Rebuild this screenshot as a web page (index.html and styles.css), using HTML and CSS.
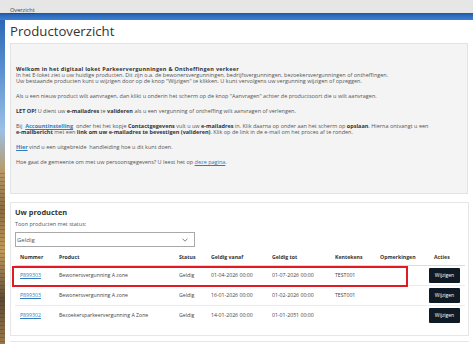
FILE: index.html
```html
<!DOCTYPE html>
<html lang="nl">
<head>
<meta charset="utf-8">
<title>Productoverzicht</title>
<link rel="stylesheet" href="styles.css">
</head>
<body>
<div class="topbar"><a href="#" class="crumb">Overzicht</a></div>
<div class="band"></div>
<div class="page">
  <main class="panel">
    <h1 class="title">Productoverzicht</h1>
    <section class="info">
      <p><b>Welkom in het digitaal loket Parkeervergunningen &amp; Ontheffingen verkeer</b><br>
      In het E-loket ziet u uw huidige producten. Dit zijn o.a. de bewonersvergunningen, bedrijfsvergunningen, bezoekersvergunningen of ontheffingen.<br>
      Uw bestaande producten kunt u wijzigen door op de knop "Wijzigen" te klikken. U kunt vervolgens uw vergunning wijzigen of opzeggen.</p>
      <p>Als u een nieuw product wilt aanvragen, dan klikt u onderin het scherm op de knop "Aanvragen" achter de productsoort die u wilt aanvragen.</p>
      <p><b>LET OP!</b> U dient uw <b>e-mailadres</b> te <b>valideren</b> als u een vergunning of ontheffing wilt aanvragen of verlengen.</p>
      <p>Bij &nbsp;<a href="#" class="link strong">Accountinstelling</a>&nbsp; onder het het kopje <b>Contactgegevens</b> vult u uw <b>e-mailadres</b> in. Klik daarna op onder aan het scherm op <b>opslaan</b>. Hierna ontvangt u een<br>
      <b>e-mailbericht</b> met een <b>link om uw e-mailadres te bevestigen (valideren)</b>. Klik op de link in de e-mail om het proces af te ronden.</p>
      <p><a href="#" class="link strong">Hier</a> vind u een uitgebreide &nbsp;handleiding hoe u dit kunt doen.</p>
      <p>Hoe gaat de gemeente om met uw persoonsgegevens? U leest het op <a href="#" class="link">deze pagina</a>.</p>
    </section>

    <section class="products">
      <h2 class="products-title">Uw producten</h2>
      <label class="filter-label" for="status">Toon producten met status:</label>
      <div class="select">
        <span>Geldig</span>
        <svg class="chev" width="6" height="4" viewBox="0 0 6 4"><path d="M0.5 0.7 L3 3.2 L5.5 0.7" fill="none" stroke="#666" stroke-width="0.8"/></svg>
      </div>
      <div class="table-wrap">
        <table class="tbl">
          <colgroup>
            <col class="c-nr"><col class="c-prod"><col class="c-status"><col class="c-from"><col class="c-to"><col class="c-kent"><col class="c-opm"><col class="c-act">
          </colgroup>
          <thead>
            <tr><th>Nummer</th><th>Product</th><th>Status</th><th>Geldig vanaf</th><th>Geldig tot</th><th>Kentekens</th><th>Opmerkingen</th><th>Acties</th></tr>
          </thead>
          <tbody>
            <tr><td><a href="#" class="link">P899303</a></td><td>Bewonersvergunning A zone</td><td>Geldig</td><td>01-04-2026 00:00</td><td>01-07-2026 00:00</td><td>TEST001</td><td></td><td class="act"><button class="btn">Wijzigen</button></td></tr>
            <tr><td><a href="#" class="link">P899303</a></td><td>Bewonersvergunning A zone</td><td>Geldig</td><td>16-01-2026 00:00</td><td>01-02-2026 00:00</td><td>TEST001</td><td></td><td class="act"><button class="btn">Wijzigen</button></td></tr>
            <tr><td><a href="#" class="link">P899302</a></td><td>Bezoekersparkeervergunning A Zone</td><td>Geldig</td><td>14-01-2026 00:00</td><td>01-01-2051 00:00</td><td></td><td></td><td class="act"><button class="btn">Wijzigen</button></td></tr>
          </tbody>
        </table>
        <div class="highlight"></div>
      </div>
    </section>
    <div class="next-box"></div>
  </main>
</div>
</body>
</html>
```

FILE: styles.css
```css
* { box-sizing: border-box; }
html, body { margin: 0; padding: 0; }
body {
  font-family: "Open Sans", "Liberation Sans", sans-serif;
  color: #444;
  background: #fff;
  width: 473px;
  height: 344px;
  overflow: hidden;
}
.topbar {
  height: 13px;
  background: #e6e6e6;
  padding-left: 10px;
  line-height: 13px;
}
.crumb {
  font-size: 5.6px;
  color: #444;
  text-decoration: underline;
}
.band {
  height: 7px;
  background: linear-gradient(#1b56a4 0, #2f6dbe 40%, #3f7fcf 100%);
}
.page {
  padding-left: 5px;
  height: 324px;
  background:
    repeating-linear-gradient(180deg, rgba(0,0,0,0) 0 3px, rgba(60,40,20,0.25) 3px 4px) 0 150px / 5px 200px no-repeat,
    linear-gradient(180deg, #2c69b6 0, #5a90d0 50px, #9cc0e6 110px, #b89a6a 150px, #8a6a40 190px, #c09a5c 230px, #5c4a36 280px, #9a7a4c 324px);
}
.panel {
  background: #fff;
  height: 100%;
  padding: 0 4px 0 5px;
}
.title {
  margin: 0;
  padding: 2px 0 3px;
  font-size: 13.2px;
  line-height: 18px;
  font-weight: 400;
  color: #333;
}
.info {
  background: #f4f4f4;
  border: 1px solid #e3e3e3;
  margin-right: 1px;
  padding: 22px 6px 19px 5px;
  font-size: 5.5px;
  line-height: 6px;
  color: #555;
}
.info p { margin: 0 0 9px; }
.info b { color: #333; }
.info p:first-child b { letter-spacing: 0.25px; }
.link { color: #2f7dc0; text-decoration: underline; }
.strong { font-weight: 700; }

.products {
  margin-top: 8px;
  border: 1px solid #e6e6e6;
  padding: 4px 4px 10px 4px;
}
.products-title {
  margin: 0;
  font-size: 7.4px;
  line-height: 10px;
  font-weight: 700;
  color: #333;
}
.filter-label {
  display: block;
  margin-top: 3px;
  font-size: 5.5px;
  line-height: 8px;
  color: #555;
}
.select {
  margin-top: 4px;
  width: 180px;
  height: 15px;
  border: 1px solid #a9a9a9;
  display: flex;
  align-items: center;
  justify-content: space-between;
  padding: 0 6px 0 1px;
  font-size: 6px;
  color: #555;
}
.table-wrap {
  position: relative;
  margin-top: 2px;
}
.tbl {
  width: 450px;
  table-layout: fixed;
  border-collapse: collapse;
  font-size: 5.2px;
  color: #444;
}
.c-nr { width: 39px; }
.c-prod { width: 120px; }
.c-status { width: 32px; }
.c-from { width: 61px; }
.c-to { width: 63px; }
.c-kent { width: 45px; }
.c-opm { width: 54px; }
.c-act { width: 36px; }
.tbl th {
  text-align: left;
  font-weight: 700;
  color: #333;
  height: 16px;
  padding: 0 0 0 5px;
  border-bottom: 1px solid #dcdcdc;
  white-space: nowrap;
}
.tbl td {
  height: 20px;
  padding: 0 0 0 5px;
  border-bottom: 1px solid #ececec;
  white-space: nowrap;
}
.tbl tbody tr:last-child td { border-bottom: none; }
.tbl td.act { padding-left: 0; }
.btn {
  display: block;
  width: 31px;
  height: 15px;
  background: #0e1b25;
  color: #fff;
  border: none;
  border-radius: 1px;
  font-family: inherit;
  font-size: 5px;
  padding: 0;
}
.highlight {
  position: absolute;
  left: -3px;
  top: 17px;
  width: 396px;
  height: 21px;
  border: 2px solid #e01b24;
  pointer-events: none;
}
.next-box {
  margin-top: 5px;
  border-top: 1px solid #e6e6e6;
  height: 10px;
}
```
